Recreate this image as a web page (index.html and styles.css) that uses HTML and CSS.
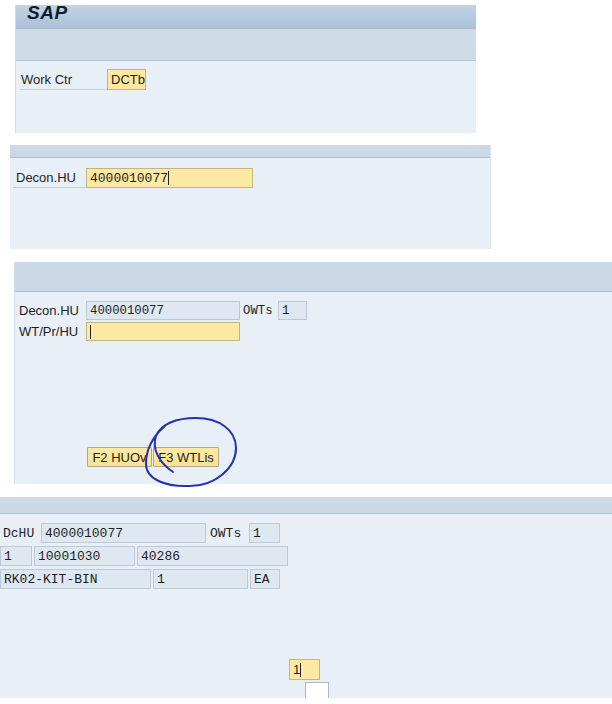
FILE: index.html
```html
<!DOCTYPE html>
<html>
<head>
<meta charset="utf-8">
<title>SAP RF screens</title>
<link rel="stylesheet" href="styles.css">
</head>
<body>
<div class="page">
  <section class="win w1">
    <div class="title"><span class="sap">SAP</span></div>
    <div class="band"></div>
    <div class="body b1">
      <div class="row r21">
        <span class="lbl ul l1">Work Ctr</span>
        <span class="fld edit f-dctb">DCTb<i class="caret"></i></span>
      </div>
    </div>
  </section>

  <section class="win w2">
    <div class="hdr h2"></div>
    <div class="body b2">
      <div class="row r20">
        <span class="lbl ul l2">Decon.HU</span>
        <span class="fld edit mono f-hu2">4000010077<i class="caret"></i></span>
      </div>
    </div>
  </section>

  <section class="win w3">
    <div class="hdr h3"></div>
    <div class="body b3">
      <div class="row r18">
        <span class="lbl l3">Decon.HU</span>
        <span class="fld ro mono sm f-hu3">4000010077</span>
        <span class="lbl mono sm l3b">OWTs</span>
        <span class="fld ro mono sm f-owt3">1</span>
      </div>
      <div class="row r18 gap3">
        <span class="lbl l3">WT/Pr/HU</span>
        <span class="fld edit f-hu3"><i class="caret"></i></span>
      </div>
      <div class="btns">
        <button class="btn b-f2">F2 HUOv</button>
        <button class="btn b-f3">F3 WTLis</button>
      </div>
    </div>
  </section>

  <section class="win w4">
    <div class="hdr h4"></div>
    <div class="body b4">
      <div class="row r20">
        <span class="lbl mono l4a">DcHU</span>
        <span class="fld ro mono f4-hu">4000010077</span>
        <span class="lbl mono l4b">OWTs</span>
        <span class="fld ro mono f4-owt">1</span>
      </div>
      <div class="row r20 gap4 g2">
        <span class="fld ro mono f4-pos">1</span>
        <span class="fld ro mono f4-mat">10001030</span>
        <span class="fld ro mono f4-batch">40286</span>
      </div>
      <div class="row r20 gap4 g2">
        <span class="fld ro mono f4-bin">RK02-KIT-BIN</span>
        <span class="fld ro mono f4-qty">1</span>
        <span class="fld ro mono f4-uom">EA</span>
      </div>
      <div class="row qtyrow">
        <span class="fld edit f4-in">1<i class="caret"></i></span>
      </div>
      <div class="whitebox"></div>
    </div>
  </section>
</div>

<svg class="ink" width="612" height="704" viewBox="0 0 612 704">
  <path d="M173,472 C161,464 151,450 156,436 C161,424 176,418 196,418 C219,418 236,430 236,448 C236,468 215,486 190,486 C165,487 146,479 146,464 C146,450 152,437 165,426" fill="none" stroke="#2630b4" stroke-width="2" stroke-linecap="round"/>
</svg>
</body>
</html>
```

FILE: styles.css
```css
html, body {
  margin: 0;
  padding: 0;
}
body {
  width: 612px;
  height: 704px;
  overflow: hidden;
  background: #ffffff;
  font-family: "Liberation Sans", Arial, sans-serif;
  font-size: 13px;
  color: #1e1e1e;
  position: relative;
}
.page {
  display: flex;
  flex-direction: column;
  padding-top: 5px;
}
.win {
  display: flex;
  flex-direction: column;
  background: #e9eff6;
  box-sizing: border-box;
  flex-shrink: 0;
}
.win > *, .body > * { flex-shrink: 0; }
.w1 {
  margin-left: 15px;
  width: 461px;
  height: 128px;
  border-left: 1px solid #d2dbe5;
}
.title {
  height: 24px;
  background: linear-gradient(#c2d3e4, #aac0d6);
  padding-left: 11px;
  display: flex;
  align-items: flex-start;
}
.sap {
  font-family: "Liberation Sans", Arial, sans-serif;
  font-style: italic;
  font-weight: bold;
  font-size: 19px;
  letter-spacing: 0.5px;
  line-height: 22px;
  margin-top: -3px;
  color: #0e1c34;
}
.band {
  height: 31px;
  background: #cfdce8;
  border-bottom: 1px solid #b7c7d7;
}
.hdr {
  background: #cbd9e6;
  border-bottom: 1px solid #aebfd0;
}
.h2 { height: 12px; }
.h3 { height: 29px; }
.h4 { height: 16px; }

.w2 {
  margin-top: 12px;
  margin-left: 10px;
  width: 481px;
  height: 104px;
  border-right: 1px solid #dde3ea;
}
.w3 {
  margin-top: 13px;
  margin-left: 14px;
  width: 598px;
  height: 222px;
  border-left: 1px solid #d6dee7;
}
.w4 {
  margin-top: 13px;
  width: 612px;
  height: 201px;
  overflow: hidden;
}

.body { display: flex; flex-direction: column; }
.b1 { padding: 8px 0 0 4px; }
.b2 { padding: 10px 0 0 3px; }
.b3 { padding: 9px 0 0 3px; }
.b4 { padding: 9px 0 0 0; }

.row { display: flex; align-items: stretch; }
.r21 { height: 21px; }
.r20 { height: 20px; }
.r18 { height: 19px; }
.gap3 { margin-top: 2px; }
.gap4 { margin-top: 3px; }
.g2 { gap: 2px; }

.lbl {
  box-sizing: border-box;
  display: flex;
  align-items: center;
  white-space: nowrap;
}
.ul { border-bottom: 1px solid #c3ccd6; }
.l1 { width: 87px; padding-left: 1px; }
.l2 { width: 73px; padding-left: 3px; }
.l3 { width: 68px; padding-left: 1px; }
.l3b { width: 38px; padding-left: 3px; }
.l4a { width: 41px; padding-left: 3px; }
.l4b { width: 43px; padding-left: 4px; }

.fld {
  box-sizing: border-box;
  display: flex;
  align-items: center;
  white-space: nowrap;
  overflow: hidden;
  padding-left: 3px;
}
.edit {
  background: #fde9a3;
  border: 1px solid #c4b57e;
}
.ro {
  background: #dfe8f1;
  border: 1px solid #bac9d7;
}
.mono {
  font-family: "Liberation Mono", "DejaVu Sans Mono", monospace;
  font-size: 13px;
}
.mono.sm { font-size: 12.3px; }

.caret {
  display: inline-block;
  width: 1px;
  height: 14px;
  background: #222;
}

.f-dctb { width: 39px; }
.f-hu2 { width: 167px; }
.f-hu3 { width: 154px; }
.f-owt3 { width: 29px; }

.btns {
  display: flex;
  gap: 1px;
  margin-top: 106px;
  margin-left: 69px;
}
.btn {
  box-sizing: border-box;
  height: 20px;
  padding: 0;
  margin: 0;
  background: linear-gradient(#fee9a5, #fbe195);
  border: 1px solid #aea88c;
  border-radius: 1px;
  font-family: "Liberation Sans", Arial, sans-serif;
  font-size: 13px;
  color: #1e1e1e;
}
.b-f2 { width: 65px; }
.b-f3 { width: 66px; }

.f4-hu { width: 165px; }
.f4-owt { width: 31px; }
.f4-pos { width: 32px; }
.f4-mat { width: 101px; }
.f4-batch { width: 151px; }
.f4-bin { width: 151px; }
.f4-qty { width: 95px; }
.f4-uom { width: 30px; }

.qtyrow {
  margin-top: 70px;
  margin-left: 289px;
  height: 21px;
}
.f4-in {
  width: 31px;
  font-size: 13px;
}
.whitebox {
  margin-top: 2px;
  margin-left: 305px;
  width: 24px;
  height: 16px;
  box-sizing: border-box;
  background: #ffffff;
  border: 1px solid #aeb6c0;
  border-bottom: none;
}

.ink {
  position: absolute;
  left: 0;
  top: 0;
  pointer-events: none;
}
```
